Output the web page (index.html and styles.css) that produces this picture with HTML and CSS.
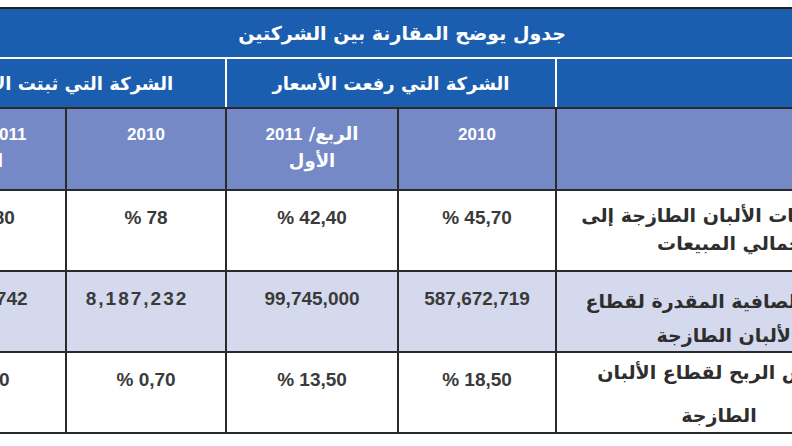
FILE: index.html
```html
<!DOCTYPE html>
<html lang="ar">
<head>
<meta charset="utf-8">
<link rel="stylesheet" href="styles.css">
</head>
<body>
<div class="frame">
  <table class="cmp" dir="rtl">
    <colgroup>
      <col class="c-label">
      <col class="c-a2010">
      <col class="c-a2011">
      <col class="c-b2010">
      <col class="c-b2011">
    </colgroup>
    <tr class="r-title">
      <td colspan="5"><span class="title-text">جدول يوضح المقارنة بين الشركتين</span></td>
    </tr>
    <tr class="r-group">
      <th class="g-empty"></th>
      <th colspan="2" class="g-cell">الشركة التي رفعت الأسعار</th>
      <th colspan="2" class="g-cell">الشركة التي ثبتت الأسعار</th>
    </tr>
    <tr class="r-years">
      <th></th>
      <th><span class="yr">2010</span></th>
      <th><span class="yr-line">الربع/ <span class="yr">2011</span></span><br><span class="yr-line">الأول</span></th>
      <th><span class="yr">2010</span></th>
      <th><span class="yr-line"><span class="yr">2011</span> /الربع</span><br><span class="yr-line">الأول</span></th>
    </tr>
    <tr class="r-row r-one">
      <td class="lbl"><div class="l1">نسبة مبيعات الألبان الطازجة إلى</div><div class="l2">إجمالي المبيعات</div></td>
      <td class="num">% 45,70</td>
      <td class="num">% 42,40</td>
      <td class="num">% 78</td>
      <td class="num">% 55,80</td>
    </tr>
    <tr class="r-row r-two">
      <td class="lbl"><div class="l1">الأرباح الصافية المقدرة لقطاع</div><div class="l2">الألبان الطازجة</div></td>
      <td class="num">587,672,719</td>
      <td class="num">99,745,000</td>
      <td class="num spaced">8,187,232</td>
      <td class="num">14,506,742</td>
    </tr>
    <tr class="r-row r-three">
      <td class="lbl"><div class="l1">هامش الربح لقطاع الألبان</div><div class="l2">الطازجة</div></td>
      <td class="num">% 18,50</td>
      <td class="num">% 13,50</td>
      <td class="num">% 0,70</td>
      <td class="num">% 1,60</td>
    </tr>
  </table>
</div>
</body>
</html>
```
FILE: styles.css
```css
html, body {
  margin: 0;
  padding: 0;
  background: #ffffff;
}

.frame {
  width: 792px;
  height: 446px;
  overflow: hidden;
  padding-top: 7px;
  box-sizing: border-box;
}

.cmp {
  margin-left: -107px;
  width: 1016px;
  table-layout: fixed;
  border-collapse: collapse;
  font-family: "DejaVu Sans", "Liberation Sans", sans-serif;
}

.c-label { width: 354px; }
.c-a2010 { width: 158px; }
.c-a2011 { width: 172px; }
.c-b2010 { width: 160px; }
.c-b2011 { width: 172px; }

.cmp td, .cmp th {
  padding: 0;
  text-align: center;
}

/* title row */
.r-title td {
  height: 48px;
  background: #1b5eb0;
  border-top: 2px solid #222222;
  border-bottom: 2px solid #ffffff;
  color: #ffffff;
  vertical-align: middle;
}

.title-text {
  font-size: 19px;
  font-weight: bold;
}

/* group row */
.r-group th {
  height: 48px;
  background: #1b5eb0;
  color: #ffffff;
  font-size: 18px;
  font-weight: bold;
  vertical-align: middle;
  border-left: 2px solid #ffffff;
  border-bottom: 2px solid #2a2a2a;
}

/* years row */
.r-years th {
  height: 68px;
  background: #7589c7;
  color: #ffffff;
  vertical-align: top;
  padding-top: 12px;
  border: 2px solid #2a2a2a;
  font-size: 18px;
  font-weight: bold;
  line-height: 26px;
}

.yr {
  font-family: "Liberation Sans", Arial, sans-serif;
  font-size: 17px;
  font-weight: bold;
}

.yr-line {
  white-space: nowrap;
}

/* body rows */
.r-row td {
  border: 2px solid #2a2a2a;
  vertical-align: top;
}

.r-two td {
  background: #d5d9ee;
}

.num {
  height: 67px;
  padding-top: 12px !important;
  direction: ltr;
  font-family: "Liberation Sans", Arial, sans-serif;
  font-size: 19px;
  font-weight: bold;
  line-height: 30px;
  color: #3a3a3a;
}

.num.spaced {
  letter-spacing: 2px;
  padding-right: 18px !important;
}

.lbl {
  height: 79px;
  font-size: 19px;
  font-weight: bold;
  line-height: 30px;
  white-space: nowrap;
  color: #2e2e2e;
}

.r-one .lbl { padding-right: 0; }
.r-two .lbl { padding-right: 12px !important; }
.r-three .lbl { padding-right: 28px !important; }

.r-one .l1 { margin-top: 9px; }
.r-one .l2 { margin-top: -2px; }

.r-two .l1 { margin-top: 14px; }
.r-two .l2 { margin-top: 4px; }

.r-three .l1 { margin-top: 4px; }
.r-three .l2 { margin-top: 13px; }
```
